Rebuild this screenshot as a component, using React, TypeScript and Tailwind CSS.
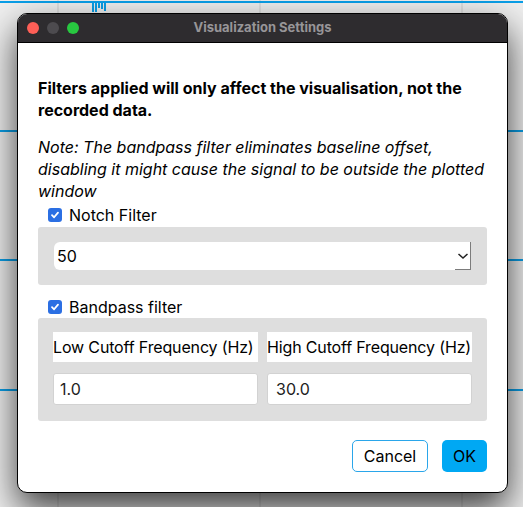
import React from "react";

function Check() {
  return (
    <span className="flex h-[14px] w-[14px] items-center justify-center rounded-[3px] bg-[#2b6fe3]">
      <svg width="10" height="10" viewBox="0 0 10 10">
        <path d="M2 5.2 L4.1 7.3 L8 2.6" fill="none" stroke="white" strokeWidth="1.8" strokeLinecap="round" strokeLinejoin="round" />
      </svg>
    </span>
  );
}

export default function App() {
  return (
    <div className="relative h-[507px] w-[523px] overflow-hidden bg-[#efefef]" style={{ fontFamily: "Inter, 'Noto Sans', sans-serif" }}>
      <svg className="absolute inset-0" width="523" height="507">
        {[58, 260, 462].map((x) => (
          <line key={x} x1={x} y1={0} x2={x} y2={507} stroke="#cfcfcf" strokeWidth="1" />
        ))}
        {[2, 131, 260, 390].map((y) => (
          <line key={y} x1={0} y1={y} x2={523} y2={y} stroke="#0a9fe8" strokeWidth="2" />
        ))}
        <path d="M93 2 V12 M96 2 V12 M99 2 V8 M102 2 V9 M105 2 V11" stroke="#0a9fe8" strokeWidth="2" />
      </svg>
      <div className="absolute left-[17px] top-[13px] flex h-[480px] w-[491px] flex-col overflow-hidden rounded-[10px] border border-black bg-white shadow-[0_16px_36px_rgba(0,0,0,0.75)]">
        <div className="relative flex h-[29px] shrink-0 items-center border-b border-black bg-[#2e2c2f] pl-[9px]">
          <div className="flex gap-[8px]">
            <span className="h-[12px] w-[12px] rounded-full bg-[#fe5f57]" />
            <span className="h-[12px] w-[12px] rounded-full bg-[#4d4b4f]" />
            <span className="h-[12px] w-[12px] rounded-full bg-[#28c840]" />
          </div>
          <div className="absolute inset-0 flex items-center justify-center text-[13px] font-bold text-[#979598]">
            Visualization Settings
          </div>
        </div>
        <div className="flex flex-1 flex-col px-[20px] pt-[34px] text-[16px] leading-[22px] text-black">
          <p className="font-bold">
            Filters applied will only affect the visualisation, not the recorded data.
          </p>
          <p className="mt-[15px] italic">
            Note: The bandpass filter eliminates baseline offset, disabling it might cause the signal to be outside the plotted window
          </p>
          <div className="mt-[2px] flex items-center gap-[7px] pl-[10px]">
            <Check />
            <span>Notch Filter</span>
          </div>
          <div className="mt-[1px] rounded-[3px] bg-[#dedede] px-[16px] py-[15px]">
            <div className="flex h-[28px] items-center rounded-l-[6px] bg-white pl-[3px]">
              <span className="flex-1">50</span>
              <span className="flex h-full w-[16px] items-center justify-center border-b border-r border-[#7c7c7c]">
                <svg width="12" height="8" viewBox="0 0 12 8">
                  <path d="M1.5 2 L6 6 L10.5 2" fill="none" stroke="#222" strokeWidth="1.5" />
                </svg>
              </span>
            </div>
          </div>
          <div className="mt-[11px] flex items-center gap-[7px] pl-[10px]">
            <Check />
            <span>Bandpass filter</span>
          </div>
          <div className="rounded-[3px] bg-[#dedede] px-[15px] pt-[14px] pb-[16px]">
            <div className="grid grid-cols-2 gap-x-[9px]">
              <div className="flex h-[30px] items-center whitespace-nowrap bg-white tracking-[-0.15px]">Low Cutoff Frequency (Hz)</div>
              <div className="flex h-[30px] items-center whitespace-nowrap bg-white tracking-[-0.15px]">High Cutoff Frequency (Hz)</div>
              <div className="mt-[11px] flex h-[32px] items-center rounded-[3px] border border-[#d2d2d2] bg-white pl-[6px] text-[#222]">1.0</div>
              <div className="mt-[11px] flex h-[32px] items-center rounded-[3px] border border-[#d2d2d2] bg-white pl-[8px] text-[#222]">30.0</div>
            </div>
          </div>
          <div className="mt-[19px] flex justify-end gap-[14px]">
            <button className="h-[32px] w-[76px] rounded-[5px] border border-[#2aa6ea] bg-white">Cancel</button>
            <button className="h-[32px] w-[45px] rounded-[5px] bg-[#00a8f3]">OK</button>
          </div>
        </div>
      </div>
    </div>
  );
}
